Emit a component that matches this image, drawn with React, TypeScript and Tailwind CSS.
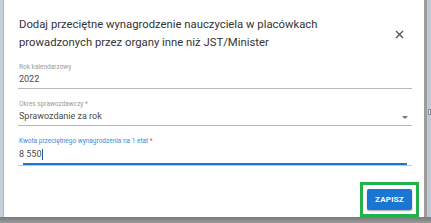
import { useState } from 'react';

function Field({
  label,
  value,
  required,
  select,
}: {
  label: string;
  value: string;
  required?: boolean;
  select?: boolean;
}) {
  return (
    <div className="flex flex-col">
      <div className="h-[10px] text-[6.5px] leading-[10px] text-[#9a9a9a] pl-[1px]">
        {label}
        {required && <span> *</span>}
      </div>
      <div className="flex items-center justify-between h-[15px] text-[9px] leading-[15px] text-[#4a4a4a] pl-[1px] pr-[4px]">
        <span>{value}</span>
        {select && (
          <svg width="6" height="3" viewBox="0 0 6 3" className="mt-[1px]">
            <path d="M0 0 L6 0 L3 3 Z" fill="#757575" />
          </svg>
        )}
      </div>
      <div className="h-px bg-[#b8b8b8] mt-[1px]" />
    </div>
  );
}

export default function App() {
  const [amount] = useState('8 550');

  return (
    <div className="w-[431px] h-[223px] overflow-hidden flex flex-col bg-[#c6ced9] font-['Roboto',sans-serif]">
      <div className="flex h-[217px]">
        <div className="w-[4px] bg-[#c6ced9] border-r border-[#b0b6be]" />

        {/* Dialog */}
        <div className="w-[420px] h-[217px] bg-white flex flex-col">
          {/* Header */}
          <div className="flex items-center justify-between pt-[16px] pl-[15px] pr-[20px]">
            <h2 className="text-[11.3px] leading-[18px] text-[#333333] font-normal">
              Dodaj przeciętne wynagrodzenie nauczyciela w placówkach
              <br />
              prowadzonych przez organy inne niż JST/Minister
            </h2>
            <svg width="9" height="9" viewBox="0 0 9 9" className="mt-[1px]">
              <path d="M1 1 L8 8 M8 1 L1 8" stroke="#555555" strokeWidth="1.4" />
            </svg>
          </div>

          {/* Fields */}
          <div className="flex flex-col gap-[10px] pl-[14px] pr-[12px] mt-[10px]">
            <Field label="Rok kalendarzowy" value="2022" />
            <Field label="Okres sprawozdawczy" value="Sprawozdanie za rok" required select />

            <div className="flex flex-col">
              <div className="h-[10px] text-[6.5px] leading-[10px] text-[#3d8ad9] pl-[1px]">
                Kwota przeciętnego wynagrodzenia na 1 etat
                <span className="text-[#e0533f]"> *</span>
              </div>
              <div className="flex items-center h-[15px] mt-[1px] text-[9px] leading-[15px] text-[#4a4a4a] pl-[1px]">
                <span>{amount}</span>
                <span className="w-px h-[11px] bg-[#1a5fb0] ml-[1px]" />
              </div>
              <div className="h-[2px] bg-[#1976d2] mx-[5px] mt-[1px]" />
              <div className="h-px bg-[#c8c8c8]" />
            </div>
          </div>

          {/* Actions */}
          <div className="flex justify-end mt-auto pr-[5px]">
            <div className="border-[3px] border-[#22b14c] p-[4px]">
              <button className="w-[45px] h-[21px] bg-[#1976d2] rounded-[2px] shadow-[0_1px_2px_rgba(0,0,0,0.35)] text-white text-[8px] font-bold tracking-[0.2px] flex items-center justify-center">
                ZAPISZ
              </button>
            </div>
          </div>
        </div>

        {/* Backdrop right */}
        <div className="w-[3px] bg-[#9c9c9c]" />
        <div className="flex-1 bg-[#c0c8d3] flex flex-col pt-[109px] items-center">
          <div className="w-[3px] h-[6px] bg-[#f0f0f0] border border-[#888]" />
        </div>
      </div>
      <div className="flex-1 bg-gradient-to-b from-[#7a7a7a] to-[#9a9a9a]" />
    </div>
  );
}
